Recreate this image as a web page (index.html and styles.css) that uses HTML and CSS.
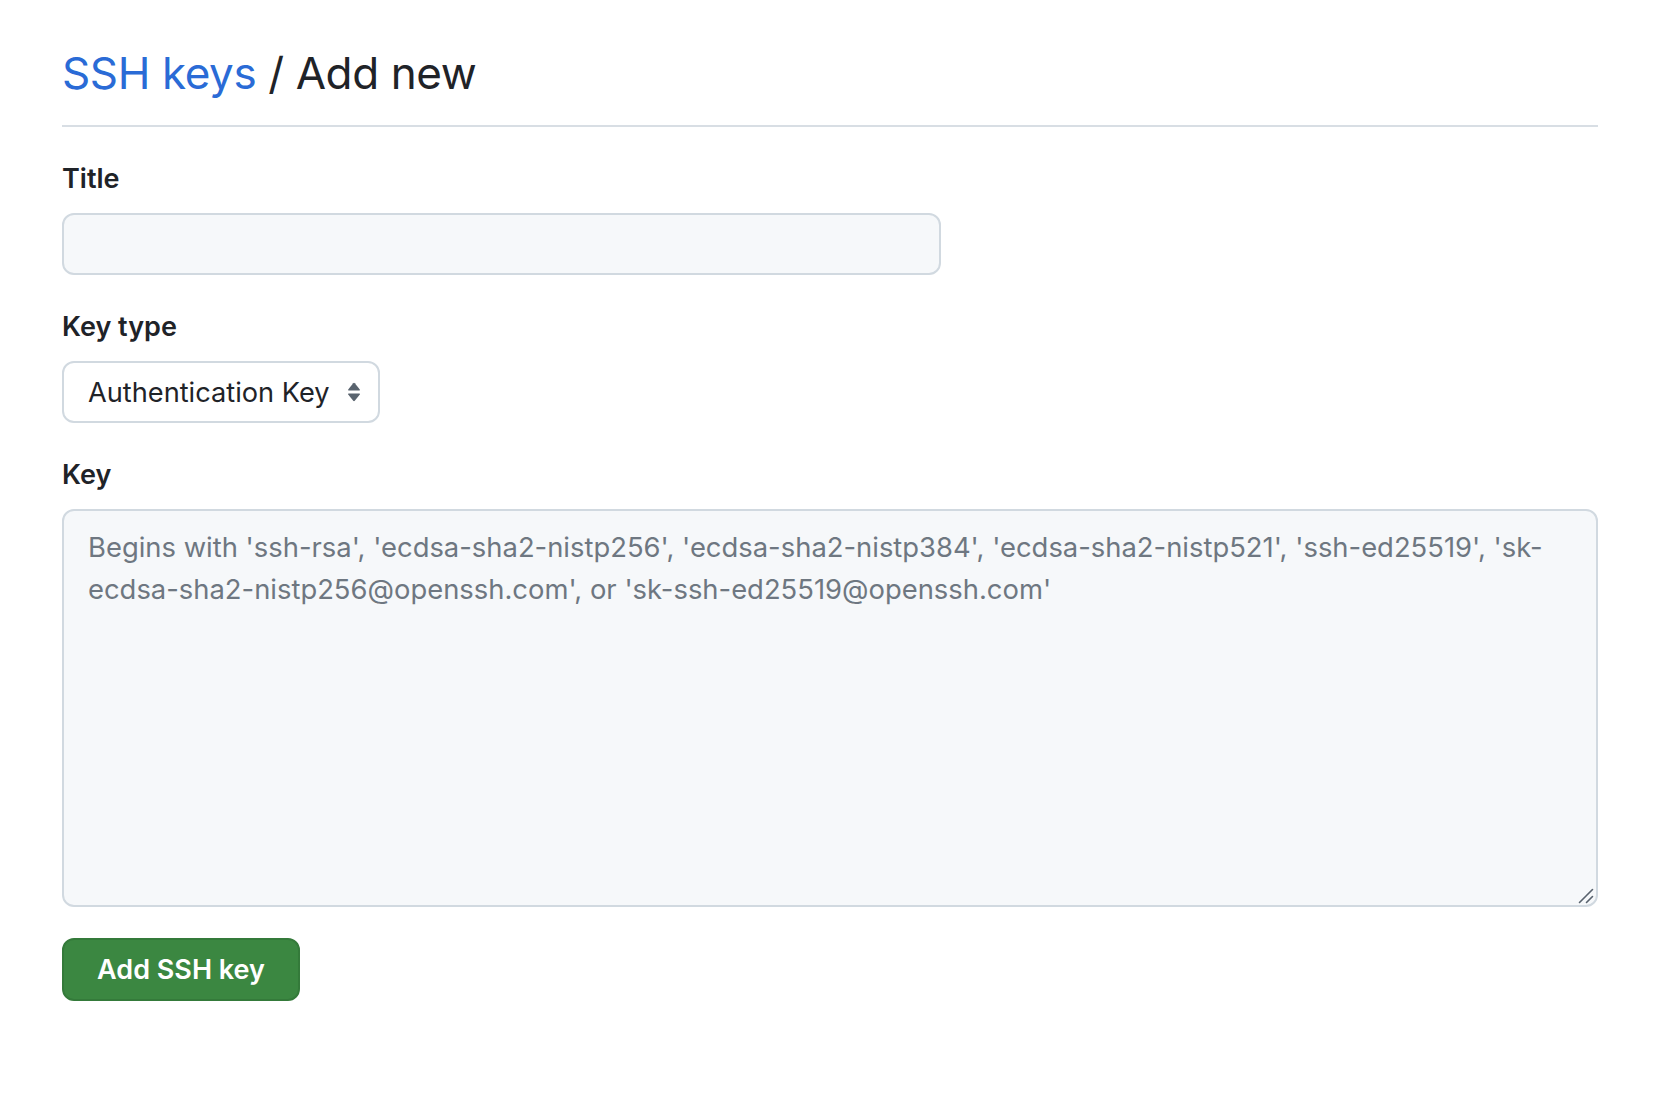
FILE: index.html
```html
<!DOCTYPE html>
<html lang="en">
<head>
    <meta charset="UTF-8">
    <meta name="viewport" content="width=device-width, initial-scale=1.0">
    <title>Add new SSH key</title>
    <link rel="stylesheet" href="styles.css">
</head>
<body>
    <div class="page">
        <div class="subhead">
            <h1><a href="#">SSH keys</a> / Add new</h1>
        </div>

        <form class="key-form">
            <div class="form-group">
                <label for="key-title">Title</label>
                <input type="text" id="key-title" class="form-control title-input">
            </div>

            <div class="form-group">
                <label for="key-type">Key type</label>
                <span class="select-wrap">
                    <select id="key-type" class="form-select">
                        <option>Authentication Key</option>
                        <option>Signing Key</option>
                    </select>
                    <!-- up/down caret drawn over the select -->
                    <svg class="select-caret" width="14" height="20" viewBox="0 0 14 20">
                        <path d="M1.2 7.4 L6.2 1.2 Q7 0.3 7.8 1.2 L12.8 7.4 Q13.4 8.4 12.2 8.4 L1.8 8.4 Q0.6 8.4 1.2 7.4 Z" fill="#59636e"/>
                        <path d="M1.2 12.6 L6.2 18.8 Q7 19.7 7.8 18.8 L12.8 12.6 Q13.4 11.6 12.2 11.6 L1.8 11.6 Q0.6 11.6 1.2 12.6 Z" fill="#59636e"/>
                    </svg>
                </span>
            </div>

            <div class="form-group">
                <label for="key-body">Key</label>
                <div class="textarea-wrap">
                    <textarea id="key-body" class="form-control key-input" placeholder="Begins with 'ssh-rsa', 'ecdsa-sha2-nistp256', 'ecdsa-sha2-nistp384', 'ecdsa-sha2-nistp521', 'ssh-ed25519', 'sk-ecdsa-sha2-nistp256@openssh.com', or 'sk-ssh-ed25519@openssh.com'"></textarea>
                    <!-- resize grip in the corner -->
                    <svg class="resize-grip" width="16" height="16" viewBox="0 0 16 16">
                        <path d="M1.5 14.5 L14.5 1.5 M8.5 14.5 L14.5 8.5" stroke="#59636e" stroke-width="1.6" stroke-linecap="round" fill="none"/>
                    </svg>
                </div>
            </div>

            <button type="submit" class="btn-primary">Add SSH key</button>
        </form>
    </div>
</body>
</html>
```

FILE: styles.css
```css
body {
    margin: 0;
    background: #ffffff;
    color: #1f2328;
    font-family: Inter, "Liberation Sans", Arial, sans-serif;
}
.page {
    padding: 43px 70px 0 62px;
}
.subhead {
    border-bottom: 2px solid #d8dee4;
    padding-bottom: 22px;
}
.subhead h1 {
    margin: 0;
    font-size: 44px;
    font-weight: 400;
    line-height: 60px;
    letter-spacing: -0.4px;
}
.subhead h1 a {
    color: #2a6bd6;
    text-decoration: none;
}
.form-group {
    margin-top: 34px;
}
.form-group label {
    display: block;
    font-size: 27px;
    font-weight: 600;
    line-height: 36px;
    margin-bottom: 16px;
}
.form-control {
    box-sizing: border-box;
    font-family: inherit;
    font-size: 27.4px;
    line-height: 42px;
    color: #1f2328;
    background: #f6f8fa;
    border: 2px solid #d1d9e0;
    border-radius: 12px;
    padding: 0 24px;
    outline: none;
}
.title-input {
    display: block;
    width: 879px;
    height: 62px;
}
.textarea-wrap {
    position: relative;
}
.key-input {
    display: block;
    width: 100%;
    height: 398px;
    padding: 15px 24px;
    resize: none;
}
.key-input::placeholder {
    color: #6e7781;
    opacity: 1;
}
.resize-grip {
    position: absolute;
    right: 4px;
    bottom: 3px;
    pointer-events: none;
}
.select-wrap {
    position: relative;
    display: inline-block;
}
.form-select {
    appearance: none;
    -webkit-appearance: none;
    box-sizing: border-box;
    width: 318px;
    height: 62px;
    padding: 0 16px 0 24px;
    font-family: inherit;
    font-size: 27.2px;
    color: #1f2328;
    background: #ffffff;
    border: 2px solid #d1d9e0;
    border-radius: 12px;
    outline: none;
}
.select-caret {
    position: absolute;
    right: 19px;
    top: 21px;
    pointer-events: none;
}
.btn-primary {
    margin-top: 31px;
    box-sizing: border-box;
    width: 238px;
    height: 63px;
    font-family: inherit;
    font-size: 27px;
    font-weight: 600;
    color: #ffffff;
    background: #3b8741;
    border: 2px solid #347a3a;
    border-radius: 12px;
    cursor: pointer;
}
```
